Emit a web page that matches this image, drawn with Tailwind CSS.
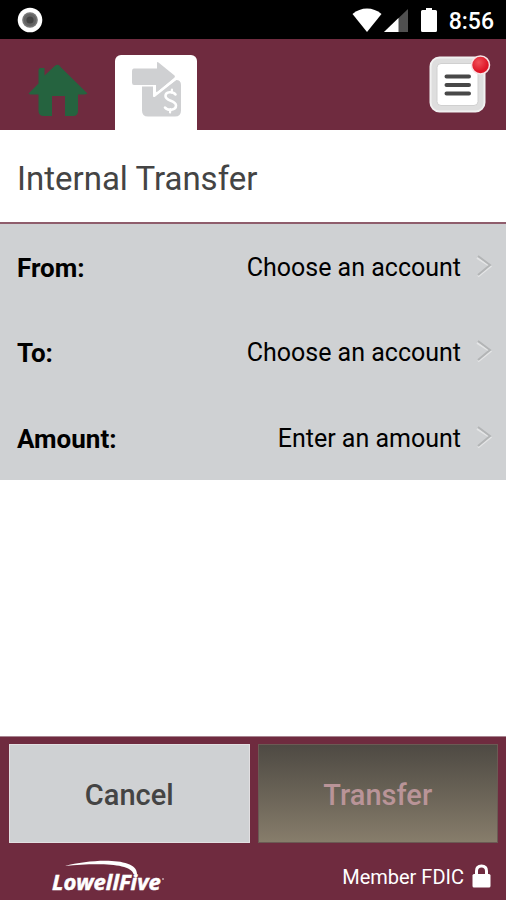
<!DOCTYPE html>
<html lang="en">
<head>
<meta charset="utf-8">
<meta name="viewport" content="width=device-width, initial-scale=1">
<title>Internal Transfer</title>
<script src="https://cdn.jsdelivr.net/npm/@tailwindcss/browser@4"></script>
</head>
<body class="flex min-h-screen flex-col bg-white font-['Roboto','Noto_Sans',sans-serif] text-black">
  <div class="flex h-[39px] items-center bg-black pr-3 pl-[17px] text-white">
    <svg class="size-[26px]" viewBox="0 0 26 26" aria-hidden="true"><circle cx="13" cy="13" r="12.3" fill="#fff"/><circle cx="13" cy="13" r="7.8" fill="#777"/><circle cx="13" cy="13" r="6.2" fill="#636363"/><circle cx="13" cy="13" r="3.6" fill="#444"/></svg>
    <div class="ml-auto flex items-center">
      <svg class="h-6 w-[30px]" viewBox="0 0 30 24" fill="#fff" aria-hidden="true"><path d="M15 24 0.5 6Q7 .5 15 .5T29.500 6Z"/></svg>
      <svg class="ml-[2px] h-6 w-6" viewBox="0 0 24 24" aria-hidden="true"><path d="M24 1V24H0Z" fill="#505050"/><path d="M14.500 10V24H0Z" fill="#fff"/></svg>
      <svg class="ml-[13px] h-6 w-4" viewBox="0 0 16 24" fill="#fff" aria-hidden="true"><path d="M5 0H11V2H14.500Q16 2 16 3.500V22.500Q16 24 14.500 24H1.500Q0 24 0 22.500V3.500Q0 2 1.500 2H5Z"/></svg>
      <span class="ml-3 pt-[3px] text-[23px] leading-[23px] font-medium">8:56</span>
    </div>
  </div>

  <header class="flex h-[91px] items-end bg-[#6f2b3f] pr-[15px]">
    <a href="#home" aria-label="Home" class="flex h-full w-[115px] items-center pl-7">
      <svg class="mt-[10px] h-[54px] w-[60px]" viewBox="0 0 60 54" fill="#25633f" aria-hidden="true"><path d="M30 1.500 59.500 30.500Q58 31.500 56 31.500H50V48Q50 53 45 53H37V33H24V53H16Q10.500 53 10.500 48V31.500H3Q1 31.500 .5 30.500L10.500 20.500V7Q10.500 5 12.500 5H16.500V12.500L27 2.800Q30 0 33 4Z"/></svg>
    </a>
    <a href="#transfer" aria-label="Transfers" class="flex h-[75px] w-[82px] justify-center rounded-t-[6px] bg-white pt-[7px]">
      <svg class="h-[56px] w-[52px]" viewBox="0 0 52 56" aria-hidden="true">
        <path d="M12 24.500H23V35L46 18Q51 18 51 23V48.500Q51 54.500 45 54.500H18Q12 54.500 12 48.500Z" fill="#cfd0d2"/>
        <path d="M4 6.500H27V1Q27-.5 28.500.5L44.500 13.500Q45.500 14.500 44 16L28 29.500Q26 31 26 29V23H4Q2 23 2 20.500V9.500Q2 6.500 4 6.500Z" fill="#cfd0d2"/>
        <path d="M24.300 24V33.800L47 15.800" fill="none" stroke="#fff" stroke-width="2.400" stroke-linejoin="round"/>
        <g fill="none" stroke="#fff" stroke-linecap="round"><path d="M45.500 32.500C43 29 35.500 29.500 35.500 34C35.500 39.500 46 38 46 43.500C46 48.500 37.500 49 35 45.500" stroke-width="2.600"/><path d="M42 27.500 41.500 30.500M40.500 47 40 50.500" stroke-width="2.200"/></g>
      </svg>
    </a>
    <button type="button" aria-label="Menu, new notifications" class="mb-4 ml-auto">
      <svg class="h-[60px] w-[62px]" viewBox="0 0 62 60" aria-hidden="true">
        <defs><radialGradient id="dot" cx=".4" cy=".35"><stop offset="0" stop-color="#f05058"/><stop offset="1" stop-color="#de1728"/></radialGradient></defs>
        <rect x="1.500" y="3.500" width="54" height="54" rx="9" fill="#dedede" stroke="#f1f1f1" stroke-width="2"/>
        <rect x="8" y="9.500" width="41" height="42" rx="4" fill="#fff" stroke="#d0d0d0"/>
        <path d="M17.500 22.500H40M17.500 31H40M17.500 39.500H40" stroke="#484848" stroke-width="4" stroke-linecap="round"/>
        <circle cx="51.500" cy="11" r="9" fill="url(#dot)" stroke="#f7e4e6" stroke-width="1.500"/>
      </svg>
    </button>
  </header>

  <main class="flex grow flex-col">
    <h1 class="flex h-[94px] items-center border-b-2 border-[#8f5d6c] px-[17px] pt-[6px] text-[33px] leading-[40px] font-normal text-[#444]">Internal Transfer</h1>
    <div class="bg-[#cfd1d3]">
      <button type="button" class="flex h-[86px] w-full items-center pr-[14px] pl-[17px] pt-[2px] text-[25px] leading-[30px]">
        <span class="text-[26px] leading-[28px] font-bold">From:</span><span class="ml-auto">Choose an account</span>
        <svg class="mb-1 ml-[15px] h-6 w-4" viewBox="0 0 16 24" fill="none" aria-hidden="true"><path d="M1 4 14.500 12.500 2 22.500" stroke="#e4e5e6" stroke-width="2"/><path d="M2 2 14 11 2 21" stroke="#b3b5b6" stroke-width="2"/></svg>
      </button>
      <button type="button" class="flex h-[85px] w-full items-center pr-[14px] pl-[17px] text-[25px] leading-[30px]">
        <span class="text-[26px] leading-[28px] font-bold">To:</span><span class="ml-auto">Choose an account</span>
        <svg class="mb-1 ml-[15px] h-6 w-4" viewBox="0 0 16 24" fill="none" aria-hidden="true"><path d="M1 4 14.500 12.500 2 22.500" stroke="#e4e5e6" stroke-width="2"/><path d="M2 2 14 11 2 21" stroke="#b3b5b6" stroke-width="2"/></svg>
      </button>
      <button type="button" class="flex h-[85px] w-full items-center pr-[14px] pl-[17px] pt-[2px] text-[25px] leading-[30px]">
        <span class="text-[26px] leading-[28px] font-bold">Amount:</span><span class="ml-auto">Enter an amount</span>
        <svg class="mb-1 ml-[15px] h-6 w-4" viewBox="0 0 16 24" fill="none" aria-hidden="true"><path d="M1 4 14.500 12.500 2 22.500" stroke="#e4e5e6" stroke-width="2"/><path d="M2 2 14 11 2 21" stroke="#b3b5b6" stroke-width="2"/></svg>
      </button>
    </div>
  </main>

  <footer class="border-t border-[#a88591] bg-[#6f2b3f]">
    <div class="grid grid-cols-2 gap-2 pt-[7px] pr-2 pl-[9px] text-[29px] leading-[36px] font-medium">
      <button type="button" class="h-[99px] border border-[#e2dfe1] bg-[#cfd1d3] pt-[2px] text-[#444]">Cancel</button>
      <button type="button" disabled class="h-[99px] border border-[#6b5a54] bg-linear-to-b from-[#4e4a43] to-[#877d6b] pt-[2px] text-[#b99498]">Transfer</button>
    </div>
    <div class="flex h-[57px] items-center pt-2 pr-[15px] pl-[50px] text-white">
      <svg class="h-10 w-[120px] overflow-visible" viewBox="0 0 120 40" role="img" aria-label="LowellFive">
        <path d="M15 10C42 3 87 1 87 18H83.500C81 7 46 7 15 10Z" fill="#fff"/>
        <text x="2" y="34" font-family="Open Sans, sans-serif" font-size="22" font-weight="700" font-style="italic" fill="#fff" stroke="#fff" stroke-width=".5">LowellFive</text>
        <circle cx="113" cy="23" r=".8" fill="#fff"/>
      </svg>
      <span class="ml-auto pt-[2px] text-[20px] leading-6">Member FDIC</span>
      <svg class="ml-2 h-6 w-[19px]" viewBox="0 0 19 24" aria-hidden="true"><path d="M4.500 11V7Q4.500 2 9.500 2T14.500 7V11" fill="none" stroke="#fff" stroke-width="3"/><rect x=".5" y="10" width="18" height="13.500" rx="1.500" fill="#fff"/></svg>
    </div>
  </footer>
</body>
</html>
